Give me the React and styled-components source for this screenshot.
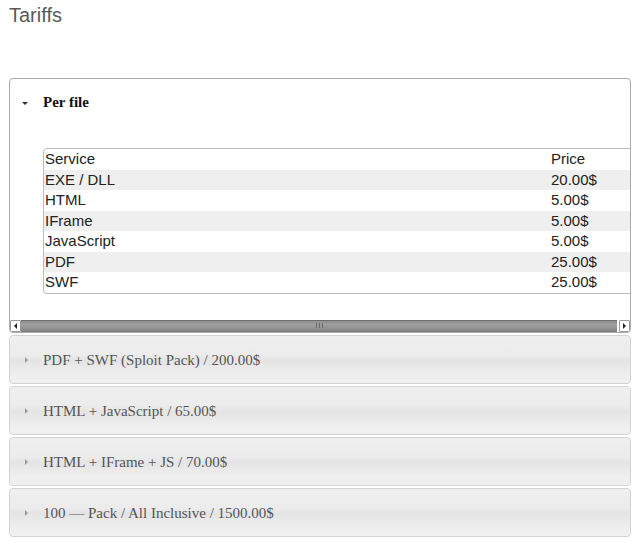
import styled, { createGlobalStyle } from "styled-components";

const GlobalStyle = createGlobalStyle`
  body {
    margin: 0;
    background: #fff;
    font-family: "Liberation Sans", Arial, sans-serif;
  }
`;

const services = [
  { name: "EXE / DLL", price: "20.00$" },
  { name: "HTML", price: "5.00$" },
  { name: "IFrame", price: "5.00$" },
  { name: "JavaScript", price: "5.00$" },
  { name: "PDF", price: "25.00$" },
  { name: "SWF", price: "25.00$" },
];

const packs = [
  "PDF + SWF (Sploit Pack) / 200.00$",
  "HTML + JavaScript / 65.00$",
  "HTML + IFrame + JS / 70.00$",
  "100 \u2014 Pack / All Inclusive / 1500.00$",
];

const App = () => {
  return (
    <Page>
      <GlobalStyle />
      <Title>Tariffs</Title>
      <Accordion>
        <OpenPanel>
          <OpenHeader>
            <ArrowDown />
            Per file
          </OpenHeader>
          <PanelBody>
            <PriceTable>
              <tbody>
                <tr>
                  <ServiceCell>Service</ServiceCell>
                  <Cell>Price</Cell>
                </tr>
                {services.map((s, i) => (
                  <Row key={s.name} striped={i % 2 === 0}>
                    <ServiceCell>{s.name}</ServiceCell>
                    <Cell>{s.price}</Cell>
                  </Row>
                ))}
              </tbody>
            </PriceTable>
          </PanelBody>
          <ScrollBar>
            <ScrollButton>
              <ArrowLeft />
            </ScrollButton>
            <Track>
              <Grip>
                <span />
                <span />
                <span />
              </Grip>
            </Track>
            <ScrollButton>
              <ArrowRight />
            </ScrollButton>
          </ScrollBar>
        </OpenPanel>
        {packs.map((p) => (
          <ClosedPanel key={p}>
            <ArrowRight grey />
            {p}
          </ClosedPanel>
        ))}
      </Accordion>
    </Page>
  );
};

const Page = styled.div`
  padding: 4px 0 0 9px;
  width: 622px;
`;

const Title = styled.h1`
  margin: 0 0 51px 0;
  font-family: "Liberation Sans", Arial, sans-serif;
  font-weight: normal;
  font-size: 20px;
  line-height: 23px;
  color: #5a5a5a;
`;

const Accordion = styled.div`
  display: flex;
  flex-direction: column;
  gap: 2px;
`;

const OpenPanel = styled.div`
  border: 1px solid #aaa;
  border-radius: 4px;
  background: #fff;
  overflow: hidden;
`;

const OpenHeader = styled.div`
  display: flex;
  align-items: center;
  padding: 15px 0 15px 12px;
  font-family: "Liberation Serif", "Times New Roman", serif;
  font-weight: bold;
  font-size: 15px;
  line-height: 17px;
  color: #111;
`;

const ArrowDown = styled.span`
  width: 0;
  height: 0;
  border-left: 3px solid transparent;
  border-right: 3px solid transparent;
  border-top: 3px solid #333;
  margin: 2px 15px 0 0;
`;

const ArrowRight = styled.span`
  width: 0;
  height: 0;
  border-top: 3px solid transparent;
  border-bottom: 3px solid transparent;
  border-left: 3px solid ${(p) => (p.grey ? "#999" : "#222")};
`;

const ArrowLeft = styled.span`
  width: 0;
  height: 0;
  border-top: 3px solid transparent;
  border-bottom: 3px solid transparent;
  border-right: 3px solid #222;
`;

const PanelBody = styled.div`
  padding: 22px 0 26px 33px;
  overflow: hidden;
`;

const PriceTable = styled.table`
  width: 640px;
  border-collapse: separate;
  border-spacing: 0;
  border: 1px solid #bbb;
  border-radius: 4px;
  font-family: "Liberation Sans", Arial, sans-serif;
  font-size: 15px;
  color: #222;
`;

const Row = styled.tr`
  background: ${(p) => (p.striped ? "#efefef" : "transparent")};
`;

const Cell = styled.td`
  padding: 2px 1px;
  line-height: 16.5px;
  text-align: left;
`;

const ServiceCell = styled(Cell)`
  width: 504px;
`;

const ScrollBar = styled.div`
  display: flex;
  align-items: stretch;
  height: 12px;
`;

const ScrollButton = styled.div`
  display: flex;
  align-items: center;
  justify-content: center;
  background: #fff;
  border: 1px solid #999;
  border-radius: 1px;
  box-sizing: border-box;
  flex: 0 0 11px;
`;

const Track = styled.div`
  flex: 1;
  display: flex;
  align-items: center;
  justify-content: center;
  margin-right: 2px;
  border-top: 1px solid #6e6e6e;
  border-bottom: 1px solid #7e7e7e;
  background: linear-gradient(#8c8c8c, #a0a0a0 35%, #939393 70%, #858585);
`;

const Grip = styled.div`
  display: flex;
  gap: 2px;
  span {
    width: 1px;
    height: 5px;
    background: #666;
  }
`;

const ClosedPanel = styled.div`
  display: flex;
  align-items: center;
  gap: 15px;
  padding: 16px 0 14px 15px;
  border: 1px solid #d3d3d3;
  border-radius: 4px;
  background: linear-gradient(
    #efefef 0%,
    #ececec 40%,
    #e4e4e4 52%,
    #e8e8e8 62%,
    #eeeeee 80%,
    #f0f0f0 100%
  );
  font-family: "Liberation Serif", "Times New Roman", serif;
  font-size: 15px;
  line-height: 17px;
  color: #555;
`;

export default App;
